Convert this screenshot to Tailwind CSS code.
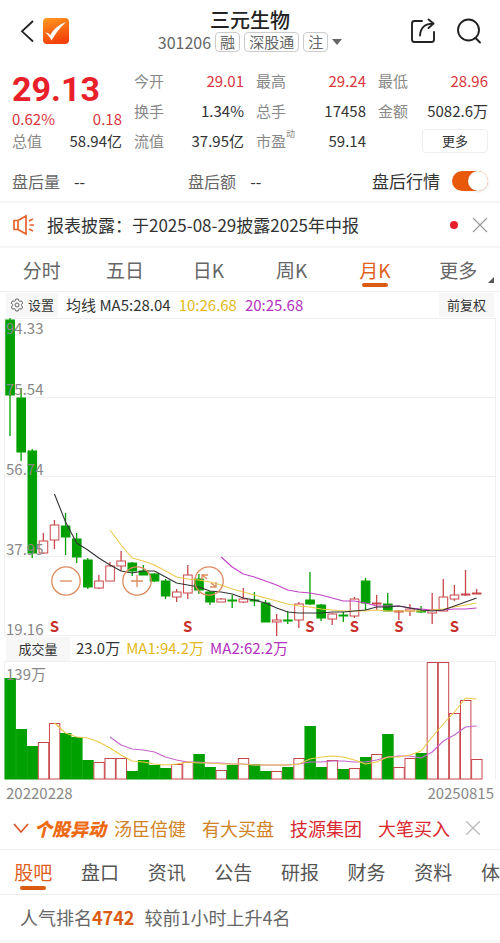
<!DOCTYPE html>
<html lang="zh-CN">
<head>
  <meta charset="UTF-8" />
  <meta name="viewport" content="width=device-width, initial-scale=1.0"/>
  <title>三元生物 301206</title>
  <script src="https://cdn.jsdelivr.net/npm/@tailwindcss/browser@4"></script>
</head>
<body class="bg-white text-[#333] font-['Noto_Sans_CJK_SC','Noto_Sans',sans-serif] overflow-x-hidden">

  <!-- Header -->
  <header class="grid grid-cols-[1fr_auto_1fr] items-center h-[62px] px-4">
    <div class="flex items-center gap-[6px]">
      <button aria-label="返回" class="pl-1">
        <svg class="w-4 h-6" viewBox="0 0 16 24" fill="none" stroke="#222" stroke-width="1.8"><path d="M13 2 2 12.300 13 22.500"/></svg>
      </button>
      <a href="#" aria-label="首页">
        <svg class="w-7 h-7" viewBox="0 0 28 28">
          <defs><linearGradient id="logo" x1="0" y1="0" x2="0.300" y2="1"><stop offset="0" stop-color="#ff9a1f"/><stop offset="1" stop-color="#f4430a"/></linearGradient></defs>
          <rect x="1" y="1" width="26" height="26" rx="4" fill="url(#logo)"/>
          <path d="M3 15.500c2 0 4 .8 5.300 2.500C11.500 12.500 16 8 24 5 18.500 10 14 15.500 9.500 23.500 7.800 20 6 17.500 3 15.500z" fill="#fff"/>
        </svg>
      </a>
    </div>
    <div class="flex flex-col items-center pb-[2px]">
      <h1 class="text-xl leading-6 font-medium text-[#222]">三元生物</h1>
      <div class="flex items-center gap-1 text-[15px] leading-5 text-[#666]">
        <span class="text-base leading-5">301206</span>
        <span class="border border-[#ccc] rounded px-1 leading-[18px]">融</span>
        <span class="border border-[#ccc] rounded px-1 leading-[18px]">深股通</span>
        <span class="border border-[#ccc] rounded px-1 leading-[18px]">注</span>
        <svg class="w-[10px] h-[6px]" viewBox="0 0 10 6"><path d="M0 0h10L5 6z" fill="#666"/></svg>
      </div>
    </div>
    <div class="flex items-center justify-end gap-5 pr-[2px]">
      <button aria-label="分享">
        <svg class="w-[26px] h-[26px]" viewBox="0 0 26 26" fill="none" stroke="#222" stroke-width="1.9" stroke-linecap="round" stroke-linejoin="round">
          <path d="M12 3H4.500Q2 3 2 5.500v16Q2 24 4.500 24h17q2.500 0 2.500-2.500V14"/><path d="M10 17.500C10.500 10.500 14.500 5.600 23 5.600M18.500 1.500 23.500 5.600 18.500 10"/>
        </svg>
      </button>
      <button aria-label="搜索">
        <svg class="w-[26px] h-[26px]" viewBox="0 0 26 26" fill="none" stroke="#222" stroke-width="1.9" stroke-linecap="round"><circle cx="12.500" cy="12" r="10.500"/><path d="m19.500 20 4.500 4.500"/></svg>
      </button>
    </div>
  </header>

  <!-- Quote -->
  <section class="grid grid-cols-4 gap-x-3 px-3 pt-1 text-[15px] leading-[30px]">
    <div class="flex flex-col">
      <strong class="font-[Roboto] text-[34px] leading-[46px] text-[#e8202a]">29.13</strong>
      <div class="flex justify-between leading-[14px] text-[#d9363e]"><span>0.62%</span><span>0.18</span></div>
      <div class="flex justify-between"><span class="text-[#888]">总值</span><span>58.94亿</span></div>
    </div>
    <div>
      <div class="flex justify-between"><span class="text-[#888]">今开</span><span class="text-[#d9363e]">29.01</span></div>
      <div class="flex justify-between"><span class="text-[#888]">换手</span><span>1.34%</span></div>
      <div class="flex justify-between"><span class="text-[#888]">流值</span><span>37.95亿</span></div>
    </div>
    <div>
      <div class="flex justify-between"><span class="text-[#888]">最高</span><span class="text-[#d9363e]">29.24</span></div>
      <div class="flex justify-between"><span class="text-[#888]">总手</span><span>17458</span></div>
      <div class="flex justify-between"><span class="flex text-[#888]">市盈<small class="text-[9px] leading-4">动</small></span><span>59.14</span></div>
    </div>
    <div>
      <div class="flex justify-between"><span class="text-[#888]">最低</span><span class="text-[#d9363e]">28.96</span></div>
      <div class="flex justify-between"><span class="text-[#888]">金额</span><span>5082.6万</span></div>
      <div class="flex justify-end"><button class="w-[66px] h-6 mt-[3px] border border-[#eee] rounded-sm text-[13px] leading-[22px]">更多</button></div>
    </div>
  </section>

  <!-- After-hours row -->
  <section class="flex items-center h-[47px] px-3 pt-1 border-b-2 border-[#f5f5f5] text-base text-[#666]">
    <div class="flex gap-[14px] w-[37%]"><span>盘后量</span><span class="text-[#333]">--</span></div>
    <div class="flex gap-[14px] flex-1"><span>盘后额</span><span class="text-[#333]">--</span></div>
    <label for="afterHours" class="mr-3 text-[17px] text-[#333]">盘后行情</label>
    <input id="afterHours" type="checkbox" checked class="appearance-none w-9 h-5 rounded-full bg-gray-300 checked:bg-[#e8590c] before:block before:w-5 before:h-5 before:rounded-full before:bg-white before:shadow checked:before:ml-4"/>
  </section>

  <!-- News -->
  <section class="flex items-center h-[45px] px-3 border-b-2 border-[#f5f5f5]">
    <svg class="w-6 h-6 shrink-0" viewBox="0 0 24 24" fill="none" stroke="#e8622c" stroke-width="1.700"><path d="M2 7.500h4v9H2zM6 7.500l8-4.500v18l-8-4.500M17 8l4-2M17.500 12H22M17 16l4 2"/></svg>
    <a href="#" class="flex-1 ml-[11px] text-[17px] leading-6">报表披露：于2025-08-29披露2025年中报</a>
    <span class="w-2 h-2 rounded-full bg-[#e8202a] mr-[14px]"></span>
    <button aria-label="关闭"><svg class="w-4 h-4" viewBox="0 0 16 16" stroke="#999" stroke-width="1.200"><path d="m1 1 14 14M15 1 1 15"/></svg></button>
  </section>

  <!-- Period tabs -->
  <nav class="grid grid-cols-6 h-11 border-b border-[#f0f0f0] text-[19px] leading-[42px] text-[#666] text-center">
    <button>分时</button>
    <button>五日</button>
    <button>日K</button>
    <button>周K</button>
    <button class="relative text-[#e0601c]">月K<span class="absolute left-1/2 -translate-x-1/2 bottom-1 w-[26px] h-1 rounded-full bg-[#d95b14]"></span></button>
    <button class="relative">更多<svg class="absolute right-[6px] bottom-2 w-[6px] h-[6px]" viewBox="0 0 6 6"><path d="M6 0v6H0z" fill="#555"/></svg></button>
  </nav>

  <!-- Chart header -->
  <div class="flex items-center gap-2 h-[26px] px-[6px] text-[15px]">
    <button class="flex items-center gap-1 h-6 px-1 bg-[#f7f7f7] text-[13px]">
      <svg class="w-[14px] h-[14px]" viewBox="0 0 14 14" fill="none" stroke="#666"><path d="M5.800 1h2.400l.5 1.700 1.100.6 1.700-.4 1.200 2.100-1.200 1.300v1.400l1.200 1.300-1.200 2.100-1.700-.4-1.100.6L8.200 13H5.800l-.5-1.700-1.100-.6-1.700.4L1.300 9l1.200-1.300V6.300L1.300 5l1.200-2.100 1.700.4 1.100-.6z"/><circle cx="7" cy="7" r="2"/></svg>
      设置
    </button>
    <span>均线 MA5:28.04</span>
    <span class="text-[#e3b91c]">10:26.68</span>
    <span class="text-[#b430c0]">20:25.68</span>
    <button class="ml-auto h-6 px-2 bg-[#f7f7f7] text-[13px]">前复权</button>
  </div>

  <!-- K line -->
  <div class="relative">
    <svg id="kline" class="block w-full overflow-visible" viewBox="0 318 500 318"></svg>
    <button aria-label="缩小" class="absolute left-[10.2%] top-[78%] w-[6%]"><svg class="block w-full" viewBox="0 0 30 30" fill="none" stroke="#dd8a5c" stroke-width="1.300"><circle cx="15" cy="15" r="14.200"/><path d="M9 15h12"/></svg></button>
    <button aria-label="放大" class="absolute left-[24.400%] top-[78%] w-[6%]"><svg class="block w-full" viewBox="0 0 30 30" fill="none" stroke="#dd8a5c" stroke-width="1.300"><circle cx="15" cy="15" r="14.200"/><path d="M9 15h12M15 9v12"/></svg></button>
    <button aria-label="全屏" class="absolute left-[38.700%] top-[78%] w-[6%]"><svg class="block w-full" viewBox="0 0 30 30" fill="none" stroke="#dd8a5c" stroke-width="1.300"><circle cx="15" cy="15" r="14.200"/><path d="m8 9 5 4M8 14V9h6M17 17l5 4M22 16v5h-6"/></svg></button>
  </div>

  <!-- Volume -->
  <div class="flex items-center gap-[6px] h-[25px] px-[6px] text-[15px]">
    <button class="w-16 h-6 bg-[#f7f7f7] text-[13px]">成交量</button>
    <span>23.0万</span>
    <span class="text-[#e3b91c]">MA1:94.2万</span>
    <span class="text-[#b430c0]">MA2:62.2万</span>
  </div>
  <svg id="volume" class="block w-full overflow-visible" viewBox="0 661 500 118"></svg>
  <div class="flex justify-between px-[6px] text-[15px] leading-[27px] text-[#888]"><span>20220228</span><span>20250815</span></div>

  <!-- Movers -->
  <section class="flex items-center gap-4 h-11 px-3 border-b border-[#eee] text-lg whitespace-nowrap">
    <div class="flex items-center gap-1 -mr-2">
      <svg class="w-[18px] h-[18px]" viewBox="0 0 18 18" fill="none" stroke="#e05a2b" stroke-width="1.800"><path d="m2 5 7 8 7-8"/></svg>
      <strong class="font-black italic text-[#ee6a12]">个股异动</strong>
    </div>
    <a href="#" class="text-[#cf8326]">汤臣倍健</a>
    <a href="#" class="text-[#cf8326]">有大买盘</a>
    <a href="#" class="text-[#d9282f]">技源集团</a>
    <a href="#" class="text-[#d9282f]">大笔买入</a>
    <button aria-label="关闭"><svg class="w-[14px] h-[14px]" viewBox="0 0 14 14" stroke="#bbb" stroke-width="1.300"><path d="m0 0 14 14M14 0 0 14"/></svg></button>
  </section>

  <!-- Bottom tabs -->
  <nav class="flex h-[45px] border-b border-[#eee] overflow-hidden text-[19px] leading-[44px] text-[#555]">
    <button class="relative shrink-0 basis-[13.333%] text-[#e0601c]">股吧<span class="absolute left-1/2 -translate-x-1/2 bottom-1 w-[26px] h-1 rounded-full bg-[#d95b14]"></span></button>
    <button class="shrink-0 basis-[13.333%]">盘口</button>
    <button class="shrink-0 basis-[13.333%]">资讯</button>
    <button class="shrink-0 basis-[13.333%]">公告</button>
    <button class="shrink-0 basis-[13.333%]">研报</button>
    <button class="shrink-0 basis-[13.333%]">财务</button>
    <button class="shrink-0 basis-[13.333%]">资料</button>
    <button class="shrink-0 basis-[13.333%]">体检</button>
  </nav>
  <p class="px-5 border-b-3 border-[#f7f7f7] text-lg leading-[45px] text-[#666]">人气排名<strong class="text-[#d95b14]">4742</strong><span class="ml-[10px]">较前1小时上升4名</span></p>

  <script>
    const $ = id => document.getElementById(id);
    const UP = "#c8474b", DOWN = "#00a000";
    const X0 = 10, STEP = 11.11, BASE = 779;

    // [down?, high, body top, body bottom, low, volume top]
    const bars = [
      [1,318,320,395,436,678],[1,388,398,452,461,729],[1,449,451,553,558,746],[0,533,541,553,554,742],
      [0,520,525,540,549,723],[1,513,526,537,555,733],[1,533,539,557,563,737],[1,558,560,587,589,760],
      [0,575,581,588,589,762],[0,562,566,581,581,758],[0,551,561,566,571,758],[1,562,563,571,576,771],
      [1,565,571,575,575,760],[1,573,574,581,582,765],[1,579,581,596,599,768],[0,589,592,597,602,764],
      [0,565,575,593,599,762],[1,574,579,590,594,754],[1,591,592,602,605,767],[0,598,599,602,602,770],
      [1,595,600,601,608,765],[0,588,599,602,603,758],[1,592,600,601,606,764],[1,600,603,622,622,771],
      [0,614,620,622,636,771],[1,611,620,621,624,767],[0,602,604,620,628,758],[1,572,600,604,605,726],
      [1,604,605,618,621,767],[0,613,614,619,625,760],[1,612,615,616,622,769],[0,597,599,616,618,768],
      [1,578,581,603,610,757],[0,595,603,604,610,754],[1,593,604,611,611,734],[0,610,611,612,620,767],
      [0,604,609,611,616,758],[1,606,611,612,613,753],[0,593,610,613,624,662],[0,579,597,611,611,662],
      [0,585,595,599,601,713],[0,570,594,595,596,700],[0,589,593,594,594,759]
    ];

    // moving averages: first bar index, then one y per bar
    const ma5 = [4, 494,522,543,550,558,565,571,573,571,571,577,583,585,587,591,592,594,598,600,603,608,612,613,613,613,612,612,611,610,607,607,606,608,610,611,610,606,602,598];
    const ma10 = [9, 530,545,558,561,565,571,577,579,580,582,585,589,592,595,598,601,604,606,607,609,610,611,611,611,610,611,611,611,611,610,609,607,605,603];
    const ma20 = [19, 557,567,574,577,581,585,590,592,593,595,598,601,601,603,606,606,606,608,609,610,610,609,609,608];
    const vma5 = [4, 723,733,737,738,742,748,755,761,762,764,765,764,762,763,763,764,764,764,765,765,765,765,764,759,757,756,757,760,764,762,757,757,755,751,737,724,712,698,699];
    const vma10 = [9, 737,745,749,750,752,757,760,762,762,763,763,764,764,765,765,765,765,764,762,762,761,761,762,762,760,757,756,756,758,752,741,735,727,726];

    const x = i => X0 + STEP * i;
    const line = ([start, ...ys], color) =>
      `<polyline fill="none" stroke="${color}" stroke-width="1.1" stroke-linejoin="round" points="${ys.map((y, k) => `${x(start + k)},${y}`).join(" ")}"/>`;
    const label = (y, text) => `<text x="6" y="${y}" font-size="15" fill="#888">${text}</text>`;
    const rule = y => `<path d="M4 ${y}.5H496" stroke="#f0f0f0"/>`;

    const candle = ([down, high, top, bottom, low], i) => {
      const c = down ? DOWN : UP;
      return `<path d="M${x(i)} ${high}V${top}M${x(i)} ${bottom}V${low}" stroke="${c}" stroke-width="1.3"/>
        <rect x="${x(i) - 4.2}" y="${top}" width="8.6" height="${bottom - top}" fill="${down ? c : "#fff"}" stroke="${c}" stroke-width="1"/>`;
    };

    const volumeBar = (b, i) => {
      const c = b[0] ? DOWN : UP;
      return `<rect x="${x(i) - 5}" y="${b[5] + .5}" width="10.4" height="${BASE - b[5] - .5}" fill="${b[0] ? c : "#fff"}" stroke="${c}"/>`;
    };

    $("kline").innerHTML =
      [318, 397, 476, 556, 635].map(rule).join("") +
      `<path d="M4.5 318V636M495.500 318V636" stroke="#f0f0f0"/>` +
      bars.map(candle).join("") +
      line(ma20, "#c243c8") + line(ma10, "#ecc94b") + line(ma5, "#333") +
      label(334, "94.33") + label(395, "75.54") + label(475, "56.74") + label(555, "37.95") + label(635, "19.16") +
      [4, 16, 27, 31, 35, 40].map(i => `<text x="${x(i)}" y="632" font-size="15" font-weight="700" fill="#c9302c" text-anchor="middle">S</text>`).join("");

    $("volume").innerHTML =
      rule(661) + `<path d="M4.5 661V779M495.500 661V779" stroke="#f0f0f0"/>` +
      bars.map(volumeBar).join("") +
      line(vma10, "#c766cc") + line(vma5, "#ecc94b") + label(680, "139万");
  </script>
</body>
</html>
